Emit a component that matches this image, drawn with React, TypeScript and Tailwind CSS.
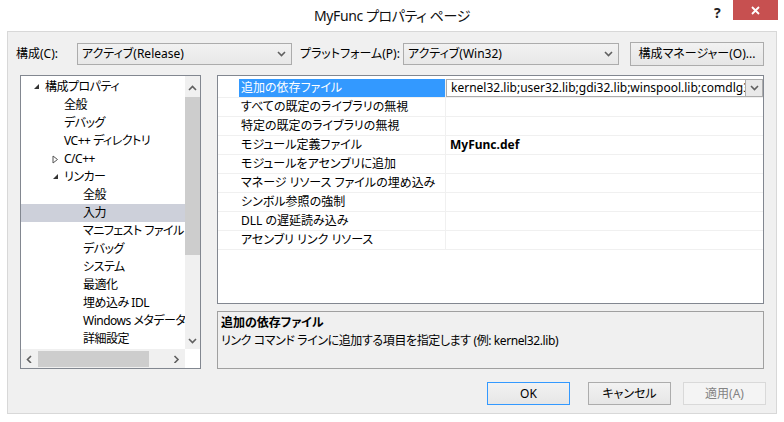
import React from 'react';

const FONT = "font-['Noto_Sans','Noto_Sans_CJK_JP',sans-serif] [font-feature-settings:'palt']";

const Chevron = ({ dir = 'down', className = '' }: { dir?: 'down' | 'up' | 'left' | 'right'; className?: string }) => {
  const paths: Record<string, string> = {
    down: 'M1 2 L4.5 5.5 L8 2',
    up: 'M1 6 L4.5 2.5 L8 6',
    left: 'M6 1 L2.5 4.5 L6 8',
    right: 'M2.5 1 L6 4.5 L2.5 8',
  };
  return (
    <svg width="9" height="8" viewBox="0 0 9 8" className={className}>
      <path d={paths[dir]} fill="none" stroke="#606060" strokeWidth="1.6" />
    </svg>
  );
};

const Combo = ({ value, width }: { value: string; width: string }) => (
  <div className={`${width} h-[22px] border border-[#acacac] bg-gradient-to-b from-[#f2f2f2] to-[#e8e8e8] flex items-center pl-[4px] pr-[5px]`}>
    <span className="flex-1 text-[12px] text-black whitespace-nowrap">{value}</span>
    <Chevron />
  </div>
);

const treeItems: { label: string; level: number; arrow?: 'open' | 'closed'; selected?: boolean }[] = [
  { label: '構成プロパティ', level: 0, arrow: 'open' },
  { label: '全般', level: 1 },
  { label: 'デバッグ', level: 1 },
  { label: 'VC++ ディレクトリ', level: 1 },
  { label: 'C/C++', level: 1, arrow: 'closed' },
  { label: 'リンカー', level: 1, arrow: 'open' },
  { label: '全般', level: 2 },
  { label: '入力', level: 2, selected: true },
  { label: 'マニフェスト ファイル', level: 2 },
  { label: 'デバッグ', level: 2 },
  { label: 'システム', level: 2 },
  { label: '最適化', level: 2 },
  { label: '埋め込み IDL', level: 2 },
  { label: 'Windows メタデータ', level: 2 },
  { label: '詳細設定', level: 2 },
];

const props: { name: string; value?: string; bold?: boolean; selected?: boolean }[] = [
  { name: '追加の依存ファイル', value: 'kernel32.lib;user32.lib;gdi32.lib;winspool.lib;comdlg32.lib;advapi32.lib', selected: true },
  { name: 'すべての既定のライブラリの無視' },
  { name: '特定の既定のライブラリの無視' },
  { name: 'モジュール定義ファイル', value: 'MyFunc.def', bold: true },
  { name: 'モジュールをアセンブリに追加' },
  { name: 'マネージ リソース ファイルの埋め込み' },
  { name: 'シンボル参照の強制' },
  { name: 'DLL の遅延読み込み' },
  { name: 'アセンブリ リンク リソース' },
];

const Expander = ({ kind }: { kind: 'open' | 'closed' }) =>
  kind === 'open' ? (
    <svg width="7" height="7" viewBox="0 0 7 7">
      <path d="M6 1 L6 6 L1 6 Z" fill="#333" />
    </svg>
  ) : (
    <svg width="7" height="9" viewBox="0 0 7 9">
      <path d="M1 1 L5.5 4.5 L1 8 Z" fill="none" stroke="#555" strokeWidth="1" />
    </svg>
  );

const Tree = () => (
  <div className="w-[181px] h-[294px] shrink-0 border border-[#828790] bg-white flex flex-col">
    <div className="flex flex-1 min-h-0">
      <div className="flex-1 min-w-0 pt-[2px] overflow-hidden">
        {treeItems.map((t, i) => (
          <div
            key={i}
            className={`h-[18px] flex items-center text-[12px] tracking-[-0.5px] whitespace-nowrap ${t.selected ? 'bg-[#cdd0da]' : ''}`}
            style={{ paddingLeft: 24 + t.level * 19 }}
          >
            <span className="relative">
              {t.arrow && (
                <span className="absolute left-[-12px] top-[5px] flex">
                  <Expander kind={t.arrow} />
                </span>
              )}
              {t.label}
            </span>
          </div>
        ))}
      </div>
      <div className="w-[15px] shrink-0 bg-[#f0f0f0] flex flex-col items-center">
        <div className="h-[17px] flex items-center justify-center mt-[3px]">
          <Chevron dir="up" />
        </div>
        <div className="w-[15px] h-[158px] bg-[#cdcdcd] mt-[1px]" />
        <div className="flex-1" />
        <div className="h-[17px] flex items-center justify-center">
          <Chevron dir="down" />
        </div>
      </div>
    </div>
    <div className="h-[19px] flex">
      <div className="flex-1 bg-[#f0f0f0] flex items-center">
        <div className="w-[17px] flex justify-center">
          <Chevron dir="left" />
        </div>
        <div className="w-[111px] h-[16px] bg-[#cdcdcd]" />
        <div className="flex-1" />
        <div className="w-[17px] flex justify-center">
          <Chevron dir="right" />
        </div>
      </div>
      <div className="w-[15px] bg-white" />
    </div>
  </div>
);

const Grid = () => (
  <div className="h-[229px] border border-[#828790] bg-white pt-[3px] flex flex-col overflow-hidden">
    {props.map((p, i) => (
      <div key={i} className="h-[19px] shrink-0 flex border-b border-[#f0f0f0] text-[12px]">
        <div className="w-[21px] shrink-0" />
        <div
          className={`w-[207px] shrink-0 pl-[2px] flex items-center whitespace-nowrap overflow-hidden border-r border-[#f0f0f0] ${p.selected ? 'bg-[#3399ff] text-white' : 'text-black'}`}
        >
          {p.name}
        </div>
        <div className={`flex-1 min-w-0 flex items-center pl-[4px] ${p.selected ? 'border border-[#acacac]' : ''}`}>
          <span className={`flex-1 min-w-0 whitespace-nowrap overflow-hidden ${p.bold ? 'font-bold' : ''}`}>{p.value}</span>
          {p.selected && (
            <div className="w-[17px] h-full shrink-0 border-l border-[#acacac] bg-[#e9e9e9] flex items-center justify-center">
              <Chevron />
            </div>
          )}
        </div>
      </div>
    ))}
  </div>
);

const Btn = ({ label, kind }: { label: string; kind?: 'default' | 'disabled' }) => (
  <div
    className={`w-[83px] h-[23px] flex items-center justify-center text-[12px] border ${
      kind === 'default'
        ? 'border-[#3399ff] bg-gradient-to-b from-[#f2f2f2] to-[#e6e6e6] text-black'
        : kind === 'disabled'
        ? 'border-[#d9d9d9] bg-[#f4f4f4] text-[#838383]'
        : 'border-[#acacac] bg-gradient-to-b from-[#f2f2f2] to-[#e6e6e6] text-black'
    }`}
  >
    {label}
  </div>
);

export default function App() {
  return (
    <div className={`w-[784px] h-[422px] bg-white flex flex-col ${FONT} text-black overflow-hidden`}>
      <div className="h-[31px] shrink-0 flex items-start relative">
        <div className="flex-1 text-center text-[14px] tracking-[-0.4px] leading-[32px] text-[#111]">MyFunc プロパティ ページ</div>
        <span className="absolute left-[714px] top-[2px] text-[14px] font-bold text-[#222]">?</span>
        <div className="absolute left-[733px] top-0 w-[45px] h-[20px] bg-[#c75050] flex items-center justify-center">
          <svg width="9" height="9" viewBox="0 0 9 9">
            <path d="M1 1 L8 8 M8 1 L1 8" stroke="white" strokeWidth="1.8" />
          </svg>
        </div>
      </div>
      <div className="flex-1 min-h-0 mx-[7px] mb-[8px] border border-[#d8d8d8] bg-[#f0f0f0] flex flex-col">
        <div className="flex items-center mt-[10px] h-[24px] text-[12px] whitespace-nowrap">
          <span className="ml-[8px] w-[61px]">構成(C):</span>
          <Combo value="アクティブ(Release)" width="w-[215px]" />
          <span className="ml-[8px] w-[103px]">プラットフォーム(P):</span>
          <Combo value="アクティブ(Win32)" width="w-[216px]" />
          <div className="ml-[11px] w-[134px] h-[24px] border border-[#acacac] bg-gradient-to-b from-[#f2f2f2] to-[#e6e6e6] flex items-center justify-center">
            構成マネージャー(O)...
          </div>
        </div>
        <div className="flex mt-[9px] ml-[12px] mr-[12px]">
          <Tree />
          <div className="ml-[16px] flex-1 min-w-0 flex flex-col">
            <Grid />
            <div className="mt-[7px] h-[58px] border border-[#a0a0a0] bg-[#f0f0f0] px-[3px] pt-[2px] text-[12px]">
              <div className="font-bold leading-[18px]">追加の依存ファイル</div>
              <div className="leading-[18px] tracking-[-0.4px]">リンク コマンド ラインに追加する項目を指定します (例: kernel32.lib)</div>
            </div>
          </div>
        </div>
        <div className="flex justify-end mt-[13px] mr-[10px]">
          <Btn label="OK" kind="default" />
          <div className="w-[18px]" />
          <Btn label="キャンセル" />
          <div className="w-[12px]" />
          <Btn label="適用(A)" kind="disabled" />
        </div>
      </div>
    </div>
  );
}
